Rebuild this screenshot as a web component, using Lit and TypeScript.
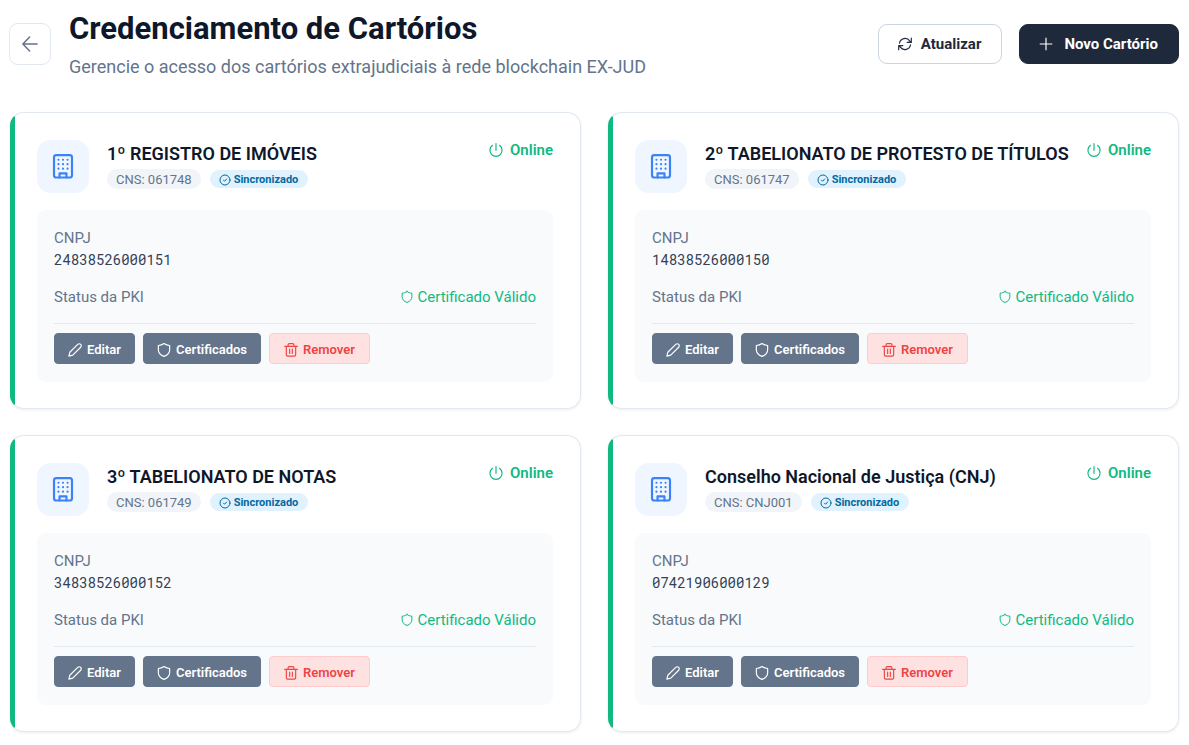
import { LitElement, html, css, svg } from "lit";
import { customElement, property } from "lit/decorators.js";

const paths = {
  back: svg`<path d="M21.500 12H3M11.500 2.800 2.500 12l9 9.200"/>`,
  refresh: svg`<path d="M2.500 10.500A9.800 9.800 0 0 1 20 6.500l2.500 2.800M22.800 2v7.300h-7M21.500 13.500A9.800 9.800 0 0 1 4 17.500l-2.500-2.800M1.200 22v-7.300h7"/>`,
  plus: svg`<path d="M12 2v20M2 12h20"/>`,
  building: svg`<rect x="3.700" y="1.100" width="16.600" height="20.600" rx="2.200"/><path d="M8.800 21.700v-3.800h6.400v3.800"/><path d="M7.800 5.300h.01M12 5.300h.01M16.200 5.300h.01M7.800 9.400h.01M12 9.400h.01M16.200 9.400h.01M7.800 13.500h.01M12 13.500h.01M16.200 13.500h.01"/>`,
  power: svg`<path d="M12 1v11.500M6 4a10.400 10.400 0 1 0 12 0"/>`,
  check: svg`<circle cx="12" cy="12" r="10"/><path d="m9 12.300 2.200 2.200 4-4.500"/>`,
  shield: svg`<path d="M12 1c3 2.200 6.200 3.200 9.700 3.300v7.200c0 5.500-3.700 9.200-9.700 11.500-6-2.300-9.700-6-9.700-11.500V4.300C5.800 4.200 9 3.200 12 1Z"/>`,
  pencil: svg`<path d="M1.500 22.500l1.600-6.600L16.700 2.300a3.500 3.500 0 0 1 5 5L8.100 20.900 1.500 22.500Z"/>`,
  trash: svg`<path d="M1.200 5.800h21.600M7 5.800V3.200C7 2 7.800 1.200 9 1.200h6c1.200 0 2 .8 2 2v2.600M4 5.800v14.400c0 1.400 1 2.400 2.400 2.400h11.200c1.400 0 2.400-1 2.400-2.400V5.800M9.700 10.500v7.500M14.300 10.500v7.500"/>`,
};

const icon = (name: keyof typeof paths, size: string) =>
  html`<svg class="icon ${size}" viewBox="0 0 24 24" aria-hidden="true">${paths[name]}</svg>`;

const shared = css`
  * { box-sizing: border-box; }
  .icon { display: block; flex: none; overflow: visible; fill: none; stroke: currentColor; stroke-width: 2; stroke-linecap: round; stroke-linejoin: round; }
  .xs { width: 12px; height: 12px; }
  .sm { width: 14px; height: 14px; }
  .md { width: 18px; height: 18px; }
  .lg { width: 26px; height: 26px; }
  button { font: inherit; cursor: pointer; display: inline-flex; align-items: center; }
`;

interface Office { name: string; cns: string; cnpj: string; }

const offices: Office[] = [
  { name: "1º REGISTRO DE IMÓVEIS", cns: "061748", cnpj: "24838526000151" },
  { name: "2º TABELIONATO DE PROTESTO DE TÍTULOS", cns: "061747", cnpj: "14838526000150" },
  { name: "3º TABELIONATO DE NOTAS", cns: "061749", cnpj: "34838526000152" },
  { name: "Conselho Nacional de Justiça (CNJ)", cns: "CNJ001", cnpj: "07421906000129" },
];

@customElement("office-card")
class OfficeCard extends LitElement {
  @property({ attribute: false }) office!: Office;

  static styles = [shared, css`
    :host { display: block; min-width: 0; }
    .card { height: 100%; padding: 26px 27px 26px 26px; background: linear-gradient(to right, #10b981 5px, #fff 5px) border-box; border: 1px solid #e2e8f0; border-left-color: transparent; border-radius: 14px; box-shadow: 0 1px 3px rgba(15, 23, 42, 0.08); }
    .head { display: flex; align-items: flex-start; gap: 18px; }
    .tile { flex: none; width: 52px; height: 53px; margin-top: 1px; border-radius: 14px; background: #eff6ff; color: #3b82f6; display: grid; place-items: center; }
    .info { flex: 1; min-width: 0; padding-top: 4px; }
    .name { margin: 0; font-size: 18px; line-height: 22px; font-weight: 600; color: #0f172a; }
    .tags { display: flex; align-items: center; gap: 9px; margin-top: 4px; }
    .cns { padding: 1px 9px 0; border-radius: 10px; background: #f1f5f9; color: #64748b; font-size: 13px; line-height: 19px; }
    .sync { display: flex; align-items: center; gap: 3px; padding: 1px 10px 0 9px; border-radius: 9px; background: #e0f2fe; color: #0369a1; font-size: 11px; line-height: 17px; font-weight: 700; }
    .online { display: flex; align-items: center; gap: 7px; color: #10b981; font-size: 15px; line-height: 22px; font-weight: 600; }
    .body { margin-top: 17px; padding: 17px 17px 18px; border-radius: 9px; background: #f8fafc; font-size: 15px; line-height: 22px; color: #64748b; }
    .list { margin: 0; }
    .list dd { margin: 0; }
    .number { font-family: "Roboto Mono", "DejaVu Sans Mono", monospace; font-size: 14px; color: #334155; }
    .pki { display: flex; justify-content: space-between; margin-top: 15px; }
    .valid { display: flex; align-items: center; gap: 5px; color: #10b981; }
    .actions { display: flex; flex-wrap: wrap; gap: 8px; margin-top: 15px; padding-top: 9px; border-top: 1px solid #e2e8f0; }
    .action { height: 31px; gap: 5px; padding: 2px 13px 0; border: 1px solid #64748b; border-radius: 4px; background: #64748b; color: #fff; font-size: 13px; font-weight: 600; }
    .danger { padding: 2px 14px 0; border-color: #fecaca; background: #fee2e2; color: #ef4444; }
  `];

  render() {
    const o = this.office;
    return html`<article class="card">
      <div class="head">
        <div class="tile">${icon("building", "lg")}</div>
        <div class="info">
          <h2 class="name">${o.name}</h2>
          <div class="tags"><span class="cns">CNS: ${o.cns}</span><span class="sync">${icon("check", "xs")}Sincronizado</span></div>
        </div>
        <div class="online">${icon("power", "sm")}Online</div>
      </div>
      <div class="body">
        <dl class="list">
          <dt>CNPJ</dt>
          <dd class="number">${o.cnpj}</dd>
          <div class="pki"><dt>Status da PKI</dt><dd class="valid">${icon("shield", "xs")}Certificado Válido</dd></div>
        </dl>
        <div class="actions">
          <button class="action">${icon("pencil", "sm")}Editar</button>
          <button class="action">${icon("shield", "sm")}Certificados</button>
          <button class="action danger">${icon("trash", "sm")}Remover</button>
        </div>
      </div>
    </article>`;
  }
}

@customElement("app-root")
class AppRoot extends LitElement {
  static styles = [shared, css`
    :host { display: block; background: #fff; font-family: Roboto, sans-serif; color: #0f172a; }
    .page { padding: 9px 10px 13px; }
    .top { display: flex; align-items: center; gap: 18px; margin-bottom: 33px; }
    .back { width: 42px; height: 42px; justify-content: center; padding: 0; margin-left: -1px; border: 1px solid #e2e8f0; border-radius: 9px; background: #fff; color: #64748b; }
    .heading { flex: 1; min-width: 0; }
    .title { margin: 0; font-size: 31px; line-height: 40px; font-weight: 700; }
    .subtitle { margin: 5px 0 0; font-size: 18px; line-height: 25px; color: #64748b; }
    .tools { display: flex; gap: 17px; }
    .tool { height: 40px; gap: 9px; padding: 0 20px 0 19px; border: 1px solid #cbd5e1; border-radius: 9px; background: #fff; color: #1e293b; font-size: 15px; font-weight: 700; }
    .primary { gap: 11px; border-color: #1e293b; background: #1e293b; color: #fff; }
    .grid { display: grid; grid-template-columns: repeat(auto-fit, minmax(min(100%, 440px), 1fr)); gap: 26px 27px; }
  `];

  render() {
    return html`<main class="page">
      <header class="top">
        <button class="back" aria-label="Voltar">${icon("back", "md")}</button>
        <div class="heading">
          <h1 class="title">Credenciamento de Cartórios</h1>
          <p class="subtitle">Gerencie o acesso dos cartórios extrajudiciais à rede blockchain EX-JUD</p>
        </div>
        <div class="tools">
          <button class="tool">${icon("refresh", "sm")}Atualizar</button>
          <button class="tool primary">${icon("plus", "sm")}Novo Cartório</button>
        </div>
      </header>
      <section class="grid">${offices.map((o) => html`<office-card .office=${o}></office-card>`)}</section>
    </main>`;
  }
}
